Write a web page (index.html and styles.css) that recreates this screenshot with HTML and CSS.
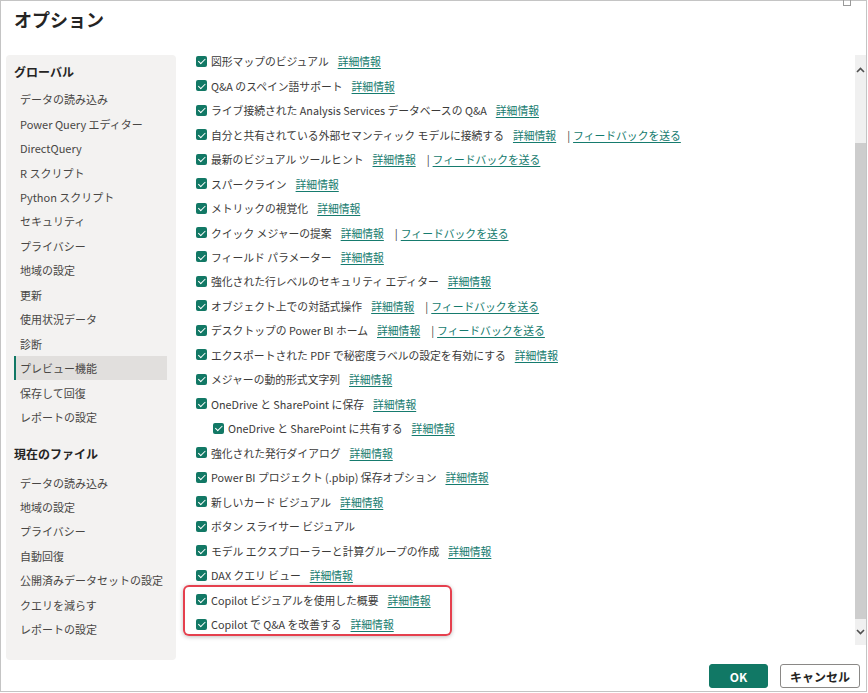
FILE: index.html
```html
<!DOCTYPE html>
<html lang="ja">
<head>
<meta charset="utf-8">
<link rel="stylesheet" href="styles.css">
</head>
<body>
<div class="window">
  <div class="maxbox"></div>
  <header class="header"><h1 class="title">オプション</h1></header>
  <div class="body">
    <nav class="sidebar">
      <div class="nav-head">グローバル</div>
      <div class="nav-item">データの読み込み</div>
      <div class="nav-item">Power Query エディター</div>
      <div class="nav-item">DirectQuery</div>
      <div class="nav-item">R スクリプト</div>
      <div class="nav-item">Python スクリプト</div>
      <div class="nav-item">セキュリティ</div>
      <div class="nav-item">プライバシー</div>
      <div class="nav-item">地域の設定</div>
      <div class="nav-item">更新</div>
      <div class="nav-item">使用状況データ</div>
      <div class="nav-item">診断</div>
      <div class="nav-item selected">プレビュー機能</div>
      <div class="nav-item">保存して回復</div>
      <div class="nav-item">レポートの設定</div>
      <div class="nav-head second">現在のファイル</div>
      <div class="nav-item">データの読み込み</div>
      <div class="nav-item">地域の設定</div>
      <div class="nav-item">プライバシー</div>
      <div class="nav-item">自動回復</div>
      <div class="nav-item">公開済みデータセットの設定</div>
      <div class="nav-item">クエリを減らす</div>
      <div class="nav-item">レポートの設定</div>
    </nav>
    <main class="main">
      <div class="row"><span class="cb"></span><span class="label">図形マップのビジュアル</span><a class="link">詳細情報</a></div>
      <div class="row"><span class="cb"></span><span class="label">Q&amp;A のスペイン語サポート</span><a class="link">詳細情報</a></div>
      <div class="row"><span class="cb"></span><span class="label">ライブ接続された Analysis Services データベースの Q&amp;A</span><a class="link">詳細情報</a></div>
      <div class="row"><span class="cb"></span><span class="label">自分と共有されている外部セマンティック モデルに接続する</span><a class="link">詳細情報</a><span class="sep">|</span><a class="link fb">フィードバックを送る</a></div>
      <div class="row"><span class="cb"></span><span class="label">最新のビジュアル ツールヒント</span><a class="link">詳細情報</a><span class="sep">|</span><a class="link fb">フィードバックを送る</a></div>
      <div class="row"><span class="cb"></span><span class="label">スパークライン</span><a class="link">詳細情報</a></div>
      <div class="row"><span class="cb"></span><span class="label">メトリックの視覚化</span><a class="link">詳細情報</a></div>
      <div class="row"><span class="cb"></span><span class="label">クイック メジャーの提案</span><a class="link">詳細情報</a><span class="sep">|</span><a class="link fb">フィードバックを送る</a></div>
      <div class="row"><span class="cb"></span><span class="label">フィールド パラメーター</span><a class="link">詳細情報</a></div>
      <div class="row"><span class="cb"></span><span class="label">強化された行レベルのセキュリティ エディター</span><a class="link">詳細情報</a></div>
      <div class="row"><span class="cb"></span><span class="label">オブジェクト上での対話式操作</span><a class="link">詳細情報</a><span class="sep">|</span><a class="link fb">フィードバックを送る</a></div>
      <div class="row"><span class="cb"></span><span class="label">デスクトップの Power BI ホーム</span><a class="link">詳細情報</a><span class="sep">|</span><a class="link fb">フィードバックを送る</a></div>
      <div class="row"><span class="cb"></span><span class="label">エクスポートされた PDF で秘密度ラベルの設定を有効にする</span><a class="link">詳細情報</a></div>
      <div class="row"><span class="cb"></span><span class="label">メジャーの動的形式文字列</span><a class="link">詳細情報</a></div>
      <div class="row"><span class="cb"></span><span class="label">OneDrive と SharePoint に保存</span><a class="link">詳細情報</a></div>
      <div class="row indent"><span class="cb"></span><span class="label">OneDrive と SharePoint に共有する</span><a class="link">詳細情報</a></div>
      <div class="row"><span class="cb"></span><span class="label">強化された発行ダイアログ</span><a class="link">詳細情報</a></div>
      <div class="row"><span class="cb"></span><span class="label">Power BI プロジェクト (.pbip) 保存オプション</span><a class="link">詳細情報</a></div>
      <div class="row"><span class="cb"></span><span class="label">新しいカード ビジュアル</span><a class="link">詳細情報</a></div>
      <div class="row"><span class="cb"></span><span class="label">ボタン スライサー ビジュアル</span></div>
      <div class="row"><span class="cb"></span><span class="label">モデル エクスプローラーと計算グループの作成</span><a class="link">詳細情報</a></div>
      <div class="row"><span class="cb"></span><span class="label">DAX クエリ ビュー</span><a class="link">詳細情報</a></div>
      <div class="highlight">
        <div class="row"><span class="cb"></span><span class="label">Copilot ビジュアルを使用した概要</span><a class="link">詳細情報</a></div>
        <div class="row"><span class="cb"></span><span class="label">Copilot で Q&amp;A を改善する</span><a class="link">詳細情報</a></div>
      </div>
    </main>
    <div class="scrollbar">
      <div class="sb-btn"><svg width="9" height="6" viewBox="0 0 9 6"><path d="M1 5 L4.5 1.5 L8 5" fill="none" stroke="#505050" stroke-width="1.6"/></svg></div>
      <div class="sb-gap"></div>
      <div class="sb-thumb"></div>
      <div class="sb-btn down"><svg width="9" height="6" viewBox="0 0 9 6"><path d="M1 1 L4.5 4.5 L8 1" fill="none" stroke="#505050" stroke-width="1.6"/></svg></div>
    </div>
  </div>
  <footer class="footer">
    <button class="btn primary">OK</button>
    <button class="btn">キャンセル</button>
  </footer>
</div>
</body>
</html>
```
FILE: styles.css
```css
* { box-sizing: border-box; }
html, body { margin: 0; padding: 0; background: #ffffff; }
body {
  font-family: "Noto Sans CJK JP", "Noto Sans", sans-serif;
  color: #3b3a39;
}
.window {
  position: relative;
  width: 867px;
  height: 692px;
  border: 1px solid #c4c4c4;
  display: flex;
  flex-direction: column;
  background: #fff;
}
.maxbox {
  position: absolute;
  top: -1px;
  left: 842px;
  width: 8px;
  height: 6px;
  border: 1px solid #9a9a9a;
  border-top: none;
}
.header {
  height: 48px;
  padding-left: 13px;
  display: flex;
  align-items: flex-start;
}
.title {
  margin: 5px 0 0 0;
  font-size: 18px;
  line-height: 26px;
  font-weight: 700;
  color: #252423;
}
.body {
  height: 612px;
  display: flex;
  flex-direction: row;
}
.sidebar {
  width: 170px;
  height: 605px;
  margin: 6px 0 0 5px;
  background: #f3f2f1;
  border-radius: 4px;
  display: flex;
  flex-direction: column;
}
.nav-head {
  height: 32px;
  padding-left: 8px;
  display: flex;
  align-items: center;
  font-size: 12px;
  font-weight: 700;
  color: #252423;
}
.nav-head.second {
  height: 33px;
  margin-top: 8px;
}
.nav-item {
  height: 24.46px;
  margin: 0 9px 0 8px;
  padding-left: 6px;
  display: flex;
  align-items: center;
  font-size: 11px;
  color: #484644;
  white-space: nowrap;
}
.nav-item.selected {
  background: #e1dfdd;
  border-left: 2px solid #117865;
  padding-left: 4px;
}
.main {
  flex: 1;
  padding-left: 20px;
  padding-top: 0;
  display: flex;
  flex-direction: column;
  font-size: 10.8px;
}
.row {
  height: 24.47px;
  display: flex;
  align-items: center;
  white-space: nowrap;
}
.row.indent { padding-left: 17px; }
.cb {
  width: 11px;
  height: 11px;
  border-radius: 2px;
  background: #127865;
  margin-right: 4px;
  flex: none;
  position: relative;
}
.cb::after {
  content: "";
  position: absolute;
  left: 3.5px;
  top: 1.5px;
  width: 3px;
  height: 5.5px;
  border: solid #fff;
  border-width: 0 1.6px 1.6px 0;
  transform: rotate(45deg);
}
.label { color: #3b3a39; }
.link {
  margin-left: 9px;
  color: #167b6e;
  text-decoration: underline;
  text-underline-offset: 2px;
}
.sep {
  margin-left: 11px;
  color: #3b3a39;
}
.link.fb { margin-left: 3px; }
.highlight {
  width: 269px;
  margin: -2px 0 0 -13px;
  padding: 2px 0 0 13px;
  height: 51px;
  border-radius: 6px;
  box-shadow: inset 0 0 0 2px #e5404e, 0 1px 4px rgba(0,0,0,0.25);
}
.scrollbar {
  width: 11px;
  height: 590px;
  margin-top: 6px;
  background: #f0f0f0;
  display: flex;
  flex-direction: column;
}
.sb-btn {
  height: 24px;
  display: flex;
  align-items: center;
  justify-content: center;
  padding-top: 6px;
}
.sb-btn.down { padding-top: 0; height: 26px; }
.sb-gap { height: 64px; }
.sb-thumb {
  flex: 1;
  background: #cdcdcd;
}
.footer {
  flex: 1;
  display: flex;
  justify-content: flex-end;
  align-items: flex-start;
  padding: 3px 6px 0 0;
  gap: 12px;
}
.btn {
  height: 24px;
  border-radius: 3px;
  font-family: "Noto Sans CJK JP", "Noto Sans", sans-serif;
  font-size: 12px;
  font-weight: 700;
  border: 1px solid #8a8886;
  background: #fff;
  color: #252423;
  width: 80px;
  padding: 0;
}
.btn.primary {
  width: 59px;
  background: #117865;
  border-color: #117865;
  color: #fff;
}
```
